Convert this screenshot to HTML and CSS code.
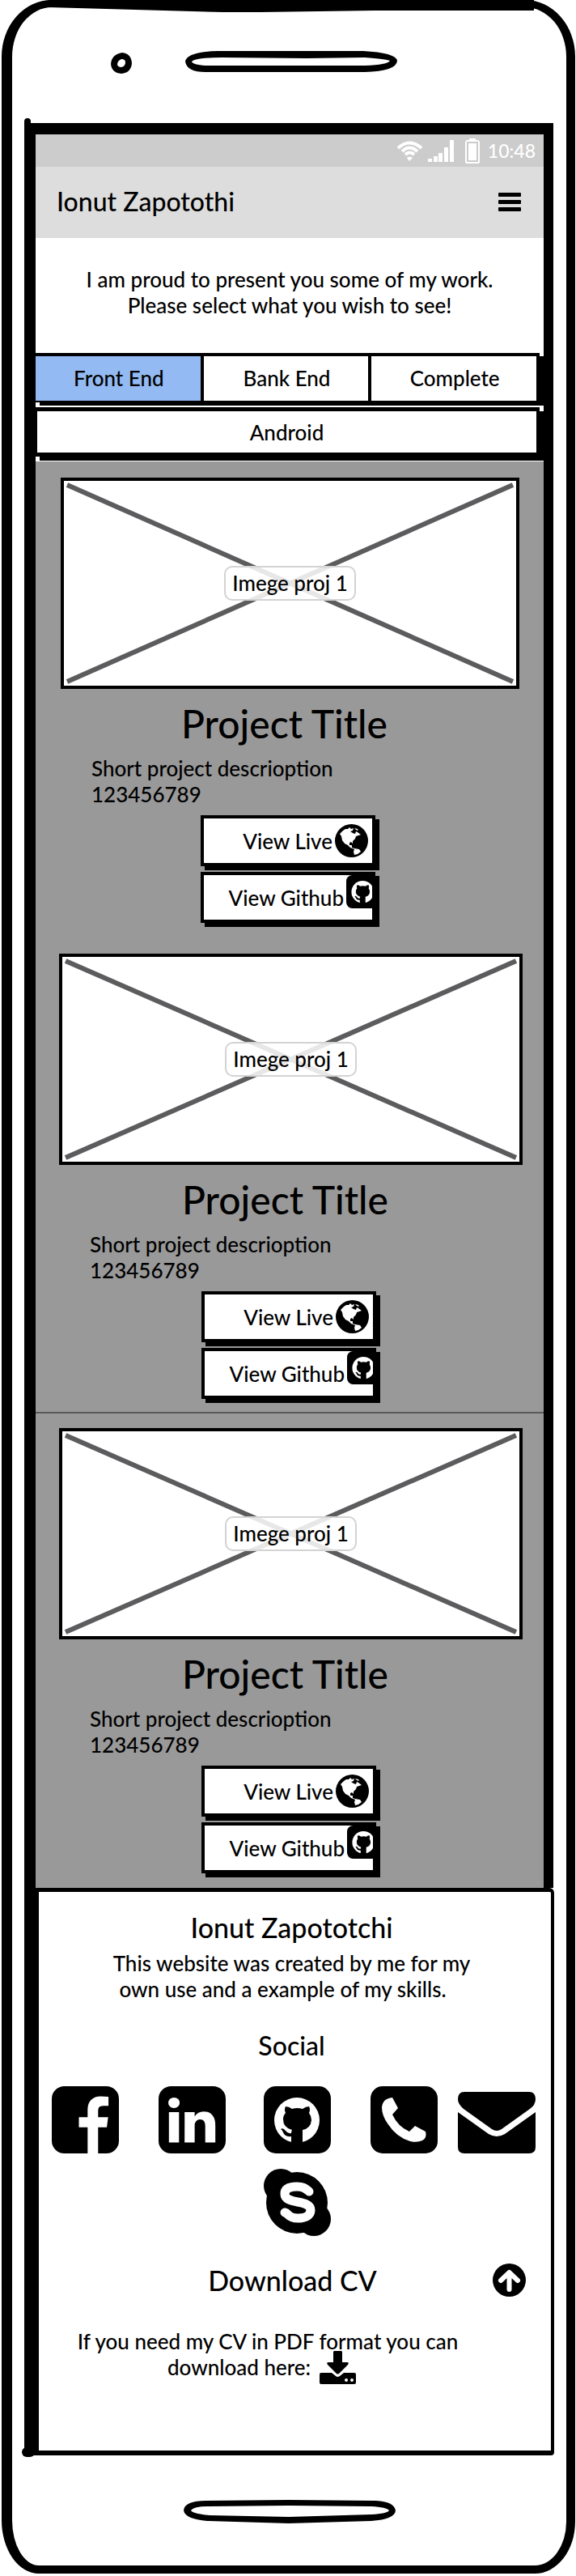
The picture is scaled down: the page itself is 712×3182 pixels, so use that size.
FILE: index.html
```html
<!DOCTYPE html>
<html lang="en">
<head>
<meta charset="utf-8">
<meta name="viewport" content="width=device-width, initial-scale=1">
<title>Ionut Zapotothi</title>
<link rel="stylesheet" href="styles.css">
</head>
<body>
<svg class="defs" aria-hidden="true">
  <symbol id="i-octocat" viewBox="0 0 83 83">
    <rect width="83" height="83" rx="15"/>
    <circle cx="41" cy="42" r="28" fill="#fff"/>
    <path d="M27 25Q31 25 35 28Q41 26 48 28Q52 25 56 25Q58 29 56 33Q59 37 59 42Q58 52 48 54V71H34V62Q26 63 24 57Q23 54 21 53Q24 51 27 55Q30 59 34 58Q34 56 35 54Q24 51 24 41Q24 36 27 33Q25 29 27 25Z"/>
  </symbol>
  <symbol id="i-globe" viewBox="0 0 41 41">
    <circle cx="20.500" cy="20.500" r="20.500"/>
    <path fill="#fff" d="M6 12L10 8L13 6L16 6L18 4L20 6L23 5L22 8L19 9L22 11L25 12L26 9L28 10L32 13L29 14L26 15L25 18L22 21V24L20 22L18 23V26L21 26L21 29L24 30L30 31L32 34L28 37L24 38L23 34L24 31L19 29L16 26L12 24L9 20L8 15Z"/>
    <path fill="#fff" d="M24 5L28 6L29 8L26 7Z"/>
  </symbol>
</svg>

<div class="phone">
  <svg class="phone-edge" viewBox="0 0 640 16" preserveAspectRatio="none" aria-hidden="true"><path d="M0 0H640V13L430 13L280 15L230 15L0 9Z"/></svg>
  <div class="phone-top">
    <svg class="camera" viewBox="0 0 26 26" aria-hidden="true"><path fill-rule="evenodd" d="M14 0Q25 1 26 13Q25 25 13 26Q1 25 0 14Q1 2 14 0ZM13 8Q8 10 8 15Q9 18 13 18Q18 17 18 12Q18 8 13 8Z"/></svg>
    <svg class="speaker" viewBox="0 0 262 26" aria-hidden="true"><path fill-rule="evenodd" d="M0 13Q2 1 40 0H220Q260 2 262 12Q261 25 222 26H25Q2 26 0 13ZM8 13Q12 8 45 8L150 9L222 8Q248 10 253 12Q250 17 222 18H25Q9 17 8 13Z"/></svg>
  </div>

  <div class="screen">
    <div class="page">
      <div class="status">
        <svg class="wifi" viewBox="0 0 33 25" aria-hidden="true"><g fill="none" stroke="#fff" stroke-width="4"><path d="M2 9Q16 -4 31 9"/><path d="M7 13Q16 4 26 13"/><path d="M11 17Q16 12 22 17"/></g><path fill="#fff" d="M13 21Q16 18 20 21L16 25Z"/></svg>
        <svg class="signal" viewBox="0 0 32 27" aria-hidden="true"><path fill="#fff" d="M0 23h5v4H0zM7 20h5v7H7zM13 16h5v11h-5zM20 9h5v18h-5zM27 0h5v27h-5z"/></svg>
        <svg class="battery" viewBox="0 0 18 31" aria-hidden="true"><path fill="#fff" fill-rule="evenodd" d="M5 0H13V2H16Q18 3 18 5V29Q18 31 16 31H2Q0 31 0 29V5Q0 3 2 2H5ZM2 4V29H16V4Z"/><path fill="#fff" d="M4 6h10v21H4z"/></svg>
        <span>10:48</span>
      </div>

      <header class="header">
        <h1 class="heading">Ionut Zapotothi</h1>
        <button class="menu" type="button" aria-label="Menu"><svg viewBox="0 0 28 23" aria-hidden="true"><rect width="28" height="5" rx="1"/><rect y="9" width="28" height="5" rx="1"/><rect y="18" width="28" height="5" rx="1"/></svg></button>
      </header>

      <p class="intro">I am proud to present you some of my work.<br>Please select what you wish to see!</p>

      <nav class="tabs" aria-label="Project type">
        <div class="tab-row">
          <button class="tab tab--on" type="button">Front End</button>
          <button class="tab" type="button">Bank End</button>
          <button class="tab" type="button">Complete</button>
        </div>
        <button class="tab-wide" type="button">Android</button>
      </nav>

      <main class="projects">
        <article class="project project--first">
          <div class="shot">
            <svg viewBox="0 0 557 253" preserveAspectRatio="none" aria-hidden="true"><path d="M4 5L553 248M553 5L4 248"/></svg>
            <span class="shot-label">Imege proj 1</span>
          </div>
          <h2 class="project-title">Project Title</h2>
          <p class="project-text">Short project descrioption<br>123456789</p>
          <div class="actions">
            <button class="action" type="button">View Live<svg class="globe" aria-hidden="true"><use href="#i-globe"/></svg></button>
            <button class="action action--code" type="button">View Github<svg class="cat" aria-hidden="true"><use href="#i-octocat"/></svg></button>
          </div>
        </article>
        <article class="project">
          <div class="shot">
            <svg viewBox="0 0 557 253" preserveAspectRatio="none" aria-hidden="true"><path d="M4 5L553 248M553 5L4 248"/></svg>
            <span class="shot-label">Imege proj 1</span>
          </div>
          <h2 class="project-title">Project Title</h2>
          <p class="project-text">Short project descrioption<br>123456789</p>
          <div class="actions">
            <button class="action" type="button">View Live<svg class="globe" aria-hidden="true"><use href="#i-globe"/></svg></button>
            <button class="action action--code" type="button">View Github<svg class="cat" aria-hidden="true"><use href="#i-octocat"/></svg></button>
          </div>
        </article>
        <article class="project project--ruled">
          <div class="shot">
            <svg viewBox="0 0 557 253" preserveAspectRatio="none" aria-hidden="true"><path d="M4 5L553 248M553 5L4 248"/></svg>
            <span class="shot-label">Imege proj 1</span>
          </div>
          <h2 class="project-title">Project Title</h2>
          <p class="project-text">Short project descrioption<br>123456789</p>
          <div class="actions">
            <button class="action" type="button">View Live<svg class="globe" aria-hidden="true"><use href="#i-globe"/></svg></button>
            <button class="action action--code" type="button">View Github<svg class="cat" aria-hidden="true"><use href="#i-octocat"/></svg></button>
          </div>
        </article>
      </main>
    </div>

    <footer class="footer">
      <div class="about">
        <h2 class="heading">Ionut Zapototchi</h2>
        <p>This website was created by me for my<br><span class="about-end">own use and a example of my skills.</span></p>
        <h2 class="heading social-title">Social</h2>
      </div>
      <div class="social">
        <a href="#facebook" aria-label="Facebook"><svg viewBox="0 128 1536 1536" aria-hidden="true"><path d="M1248 128q119 0 203.500 84.500t84.500 203.500v960q0 119-84.500 203.500t-203.500 84.500h-188v-595h199l30-232h-229v-148q0-56 23.500-84t91.500-28l122-1v-207q-63-9-178-9-136 0-217.500 80t-81.500 226v171h-200v232h200v595h-532q-119 0-203.500-84.500t-84.500-203.500v-960q0-119 84.500-203.500t203.500-84.500h960z"/></svg></a>
        <a href="#linkedin" aria-label="LinkedIn"><svg viewBox="0 128 1536 1536" aria-hidden="true"><path d="M237 1414h231v-694h-231v694zm246-908q-1-52-36-86t-93-34-94.500 34-36.500 86q0 51 35.500 85.500t92.500 34.500h1q59 0 95-34.500t36-85.500zm585 908h231v-398q0-154-73-233t-193-79q-136 0-209 117h2v-101h-231q3 66 0 694h231v-388q0-38 7-56 15-35 45-59.500t74-24.500q116 0 116 157v371zm468-998v960q0 119-84.500 203.500t-203.500 84.500h-960q-119 0-203.500-84.500t-84.500-203.500v-960q0-119 84.500-203.500t203.500-84.500h960q119 0 203.500 84.500t84.500 203.500z"/></svg></a>
        <a href="#github" aria-label="GitHub"><svg aria-hidden="true"><use href="#i-octocat"/></svg></a>
        <a href="#phone" aria-label="Phone"><svg viewBox="0 0 83 83" aria-hidden="true"><rect width="83" height="83" rx="15"/><path fill="#fff" d="M27 14L34 27L27 35Q34 50 48 56L55 49L68 56Q70 64 64 67Q58 70 49 68Q32 63 21 46Q14 36 14 26Q15 15 27 14Z"/></svg></a>
        <a class="mail" href="#mail" aria-label="Email"><svg viewBox="0 0 96 76" aria-hidden="true"><path d="M0 9Q0 0 8 0H88Q96 0 96 9Q96 16 89 21L54 46Q48 50 42 46L7 21Q0 15 0 9ZM0 25L38 52Q48 58 58 52L96 25V68Q96 76 88 76H8Q0 76 0 68Z"/></svg></a>
        <a class="skype" href="#skype" aria-label="Skype"><svg viewBox="0 0 83 83" aria-hidden="true"><circle cx="41" cy="42" r="38"/><circle cx="21" cy="21" r="21"/><circle cx="62" cy="62" r="21"/><path fill="none" stroke="#fff" stroke-width="11" stroke-linecap="round" d="M56 28C51 24 49 22 41 22C31 22 26 25 26 31C26 45 58 37 58 51C58 58 51 61 42 61C30 61 31 55 26 54"/></svg></a>
      </div>
      <div class="cv-head">
        <h2 class="heading">Download CV</h2>
        <a class="to-top" href="#top" aria-label="Back to top"><svg viewBox="0 0 41 41" aria-hidden="true"><circle cx="20.500" cy="20.500" r="20.500"/><path fill="none" stroke="#fff" stroke-width="6" stroke-linecap="round" stroke-linejoin="round" d="M10 21L20.500 11L31 21M20.500 13V32"/></svg></a>
      </div>
      <div class="cv-text">
        <p>If you need my CV in PDF format you can</p>
        <p class="cv-line">download here:<a href="#cv" aria-label="Download CV as PDF"><svg viewBox="0 0 45 41" aria-hidden="true"><path d="M18 0H27Q28 0 28 2V14H34Q37 14 35 17L24 28Q22 29 21 28L10 17Q8 14 11 14H17V2Q17 0 18 0Z"/><path fill-rule="evenodd" d="M2 27H15L20 31Q22 33 25 31L30 27H43Q45 27 45 29V39Q45 41 43 41H2Q0 41 0 39V29Q0 27 2 27ZM33 34A2 2 0 1 0 33 38A2 2 0 1 0 33 34ZM40 34A2 2 0 1 0 40 38A2 2 0 1 0 40 34Z"/></svg></a></p>
      </div>
    </footer>
  </div>

  <div class="phone-bottom">
    <svg class="home" viewBox="0 0 262 29" aria-hidden="true"><path fill-rule="evenodd" d="M0 13Q1 1 28 1L130 0L238 1Q260 2 262 13Q261 24 232 26L130 29L30 26Q2 24 0 13ZM9 13Q13 8 30 8L130 7L232 8Q251 9 254 13Q252 17 232 18L130 21L32 19Q11 17 9 13Z"/></svg>
  </div>
</div>
</body>
</html>
```
FILE: styles.css
```css
* {
  box-sizing: border-box;
  margin: 0;
  padding: 0;
}

body {
  background: #fff;
  color: #000;
  font-family: Lato, "Liberation Sans", sans-serif;
  font-size: 26px;
  font-weight: 500;
  line-height: 32px;
}

button {
  background: none;
  border: 0;
  color: inherit;
  font: inherit;
  cursor: pointer;
}

a {
  color: inherit;
}

svg {
  display: block;
  flex: none;
}

.defs {
  position: absolute;
  width: 0;
  height: 0;
}

.heading {
  font-size: 32px;
  font-weight: 500;
  line-height: 40px;
}

/* Device body */

.phone {
  position: relative;
  margin: 0 1px 2px 2px;
  border: solid #000;
  border-width: 9px 11px 10px 13px;
  border-radius: 62px 62px 50px 46px / 70px 70px 64px 66px;
}

.phone-edge {
  position: absolute;
  top: -9px;
  left: 45px;
  width: calc(100% - 85px);
  height: 16px;
}

.phone-top {
  display: flex;
  gap: 66px;
  height: 143px;
  padding: 54px 0 0 122px;
}

.camera {
  width: 26px;
  height: 26px;
  margin-top: 2px;
}

.speaker {
  width: 262px;
  height: 26px;
}

.phone-bottom {
  display: flex;
  justify-content: center;
  padding: 55px 0 52px;
}

.home {
  width: 262px;
  height: 29px;
}

/* Screen */

.screen {
  position: relative;
  margin: 0 15px;
}

.screen::before,
.screen::after {
  content: "";
  position: absolute;
  background: #000;
  border-radius: 6px;
}

.screen::before {
  top: -6px;
  left: 0;
  width: 8px;
  height: 16px;
}

.screen::after {
  bottom: -2px;
  left: -3px;
  width: 16px;
  height: 12px;
}

.page {
  margin-right: 1px;
  border: solid #000;
  border-width: 14px 12px 0 14px;
}

.status {
  display: flex;
  align-items: center;
  justify-content: flex-end;
  height: 40px;
  padding-right: 10px;
  background: #ccc;
  color: #fff;
  font-size: 23px;
}

.wifi {
  width: 33px;
  height: 25px;
  margin-right: 6px;
}

.signal {
  width: 32px;
  height: 27px;
  margin-right: 14px;
}

.battery {
  width: 18px;
  height: 31px;
  margin-right: 10px;
}

.header {
  display: flex;
  align-items: center;
  justify-content: space-between;
  height: 88px;
  padding: 0 28px 2px 26px;
  background: #ddd;
}

.menu svg {
  width: 28px;
  height: 23px;
}

.intro {
  padding: 35px 0 43px;
  text-align: center;
}

/* Filter buttons */

.tabs {
  padding: 0 5px 6px 0;
}

.tab-row {
  display: grid;
  grid-template-columns: repeat(3, 1fr);
  height: 61px;
  margin-bottom: 6px;
  border: solid #000;
  border-width: 4px 0 2px;
  box-shadow: 5px 4px 0 #000;
}

.tab {
  padding: 0 0 2px 2px;
  border-right: 4px solid #000;
}

.tab--on {
  background: #93baf2;
}

.tab-wide {
  display: block;
  width: 100%;
  height: 61px;
  border: solid #000;
  border-width: 5px 4px 5px 2px;
  background: #fff;
  box-shadow: 5px 5px 0 #000;
}

/* Projects */

.project {
  padding: 20px 26px 11px 29px;
  background: #999;
}

.project--first {
  padding: 20px 30px 13px 31px;
}

.project--ruled {
  padding: 18px 26px 13px 29px;
  border-top: 2px solid #595959;
}

.shot {
  display: grid;
  place-items: center;
  height: 261px;
  border: 4px solid #000;
  background: #fff;
}

.shot svg,
.shot-label {
  grid-area: 1 / 1;
}

.shot svg {
  width: 100%;
  height: 253px;
  fill: none;
  stroke: #5c5c5e;
  stroke-width: 6px;
}

.shot-label {
  z-index: 1;
  padding: 3px 8px 4px;
  border: 2px solid #d3d3d3;
  border-radius: 10px;
  background: rgba(255, 255, 255, 0.85);
}

.project-title {
  margin-top: 15px;
  padding-right: 14px;
  font-size: 48px;
  font-weight: 500;
  line-height: 56px;
  text-align: center;
}

.project-text {
  margin-top: 11px;
  padding-left: 38px;
}

.actions {
  display: flex;
  flex-direction: column;
  align-items: center;
  gap: 7px;
  padding: 10px 5px 5px 0;
}

.action {
  display: flex;
  align-items: center;
  justify-content: flex-end;
  gap: 3px;
  width: 216px;
  height: 63px;
  padding-right: 5px;
  border: 4px solid #000;
  background: #fff;
  box-shadow: 5px 5px 0 #000;
}

.action--code {
  padding-right: 0;
  overflow: hidden;
}

.globe,
.cat {
  width: 41px;
  height: 41px;
}

.cat {
  align-self: flex-start;
  margin-right: -9px;
}

/* Footer */

.footer {
  border: solid #000;
  border-width: 5px 4px 6px 18px;
  border-radius: 0 6px 4px 0;
  background: #fff;
}

.footer .heading {
  font-size: 34px;
}

.about {
  padding: 24px 8px 0 0;
  text-align: center;
}

.about p {
  margin-top: 8px;
}

.about-end {
  padding-right: 22px;
}

.about .social-title {
  margin-top: 34px;
  font-size: 32px;
}

.social {
  display: grid;
  grid-template-columns: 132fr 130fr 132fr 108fr 96fr;
  row-gap: 19px;
  padding: 30px 19px 0 16px;
}

.social svg {
  width: 83px;
  height: 83px;
}

.social .mail {
  align-self: end;
}

.social .mail svg {
  width: 96px;
  height: 76px;
}

.skype {
  grid-column: 3;
}

.cv-head {
  display: grid;
  grid-template-columns: 1fr auto 1fr;
  align-items: center;
  margin-top: 34px;
  padding: 0 31px 0 25px;
}

.cv-head .heading {
  grid-column: 2;
}

.to-top {
  justify-self: end;
}

.to-top svg {
  width: 41px;
  height: 41px;
}

.cv-text {
  padding: 39px 67px 87px 0;
  text-align: center;
}

.cv-line {
  display: flex;
  align-items: center;
  justify-content: center;
  gap: 11px;
  height: 32px;
  padding-right: 15px;
}

.cv-line svg {
  width: 45px;
  height: 41px;
}
```
